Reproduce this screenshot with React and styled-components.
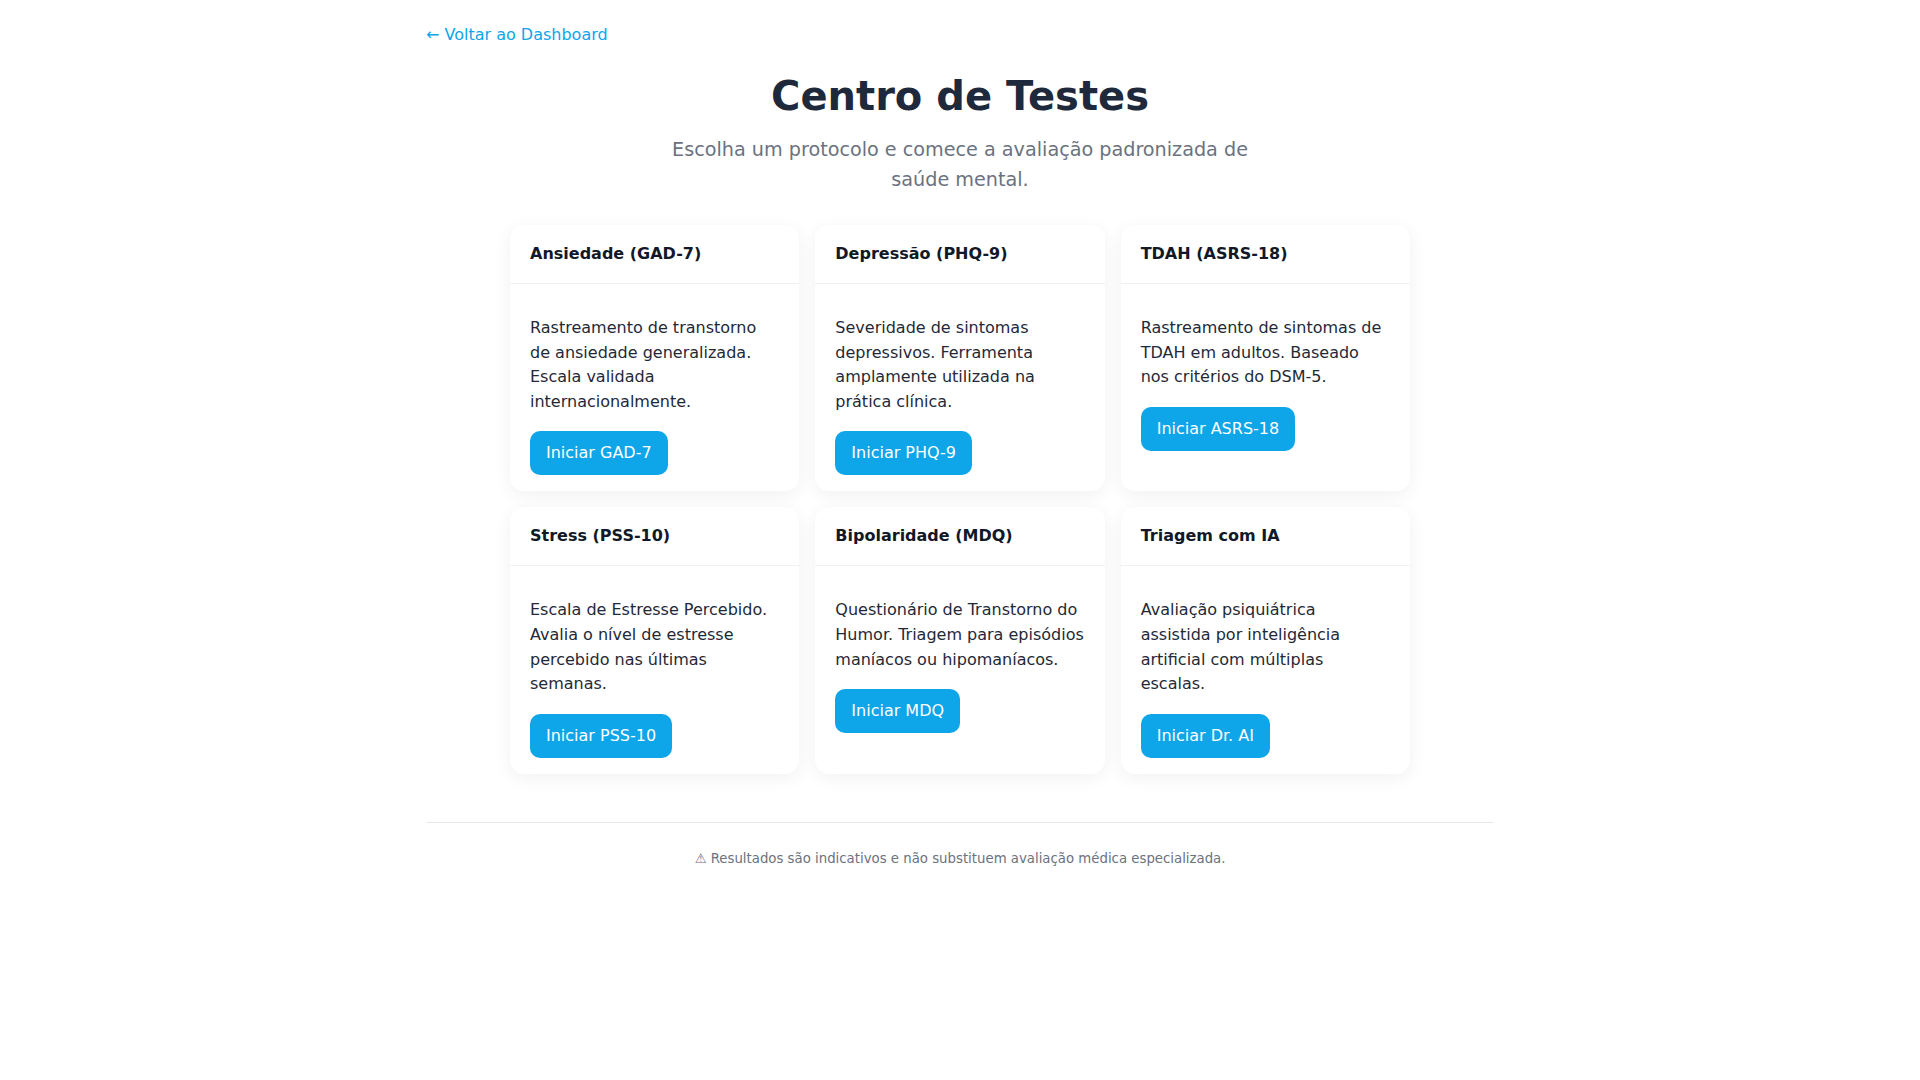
import styled, { createGlobalStyle } from "styled-components";

const GlobalStyle = createGlobalStyle`
	* {
		box-sizing: border-box;
	}
	body {
		margin: 0;
		background: #ffffff;
		font-family: "DejaVu Sans", "Noto Sans", sans-serif;
		color: #1f2937;
	}
`;

const tests = [
	{
		title: "Ansiedade (GAD-7)",
		text: "Rastreamento de transtorno de ansiedade generalizada. Escala validada internacionalmente.",
		action: "Iniciar GAD-7",
	},
	{
		title: "Depressão (PHQ-9)",
		text: "Severidade de sintomas depressivos. Ferramenta amplamente utilizada na prática clínica.",
		action: "Iniciar PHQ-9",
	},
	{
		title: "TDAH (ASRS-18)",
		text: "Rastreamento de sintomas de TDAH em adultos. Baseado nos critérios do DSM-5.",
		action: "Iniciar ASRS-18",
	},
	{
		title: "Stress (PSS-10)",
		text: "Escala de Estresse Percebido. Avalia o nível de estresse percebido nas últimas semanas.",
		action: "Iniciar PSS-10",
	},
	{
		title: "Bipolaridade (MDQ)",
		text: "Questionário de Transtorno do Humor. Triagem para episódios maníacos ou hipomaníacos.",
		action: "Iniciar MDQ",
	},
	{
		title: "Triagem com IA",
		text: "Avaliação psiquiátrica assistida por inteligência artificial com múltiplas escalas.",
		action: "Iniciar Dr. AI",
	},
];

function TestCard({ title, text, action }) {
	return (
		<Card>
			<CardHeader>
				<CardTitle>{title}</CardTitle>
			</CardHeader>
			<CardBody>
				<CardText>{text}</CardText>
				<StartButton type="button">{action}</StartButton>
			</CardBody>
		</Card>
	);
}

export default function App() {
	return (
		<>
			<GlobalStyle />
			<Page>
				<BackLink href="#">← Voltar ao Dashboard</BackLink>
				<Hero>
					<Title>Centro de Testes</Title>
					<Subtitle>
						Escolha um protocolo e comece a avaliação padronizada de
						saúde mental.
					</Subtitle>
				</Hero>
				<Grid>
					{tests.map((test) => (
						<TestCard key={test.title} {...test} />
					))}
				</Grid>
				<Footer>
					⚠ Resultados são indicativos e não substituem avaliação médica
					especializada.
				</Footer>
			</Page>
		</>
	);
}

const Page = styled.main`
	max-width: 1100px;
	margin: 0 auto;
	padding: 23px 16px 40px;
`;

const BackLink = styled.a`
	display: inline-block;
	font-size: 16px;
	line-height: 24px;
	color: #0ea5e9;
	text-decoration: none;
`;

const Hero = styled.header`
	display: flex;
	flex-direction: column;
	align-items: center;
	text-align: center;
	margin-top: 25px;
`;

const Title = styled.h1`
	margin: 0;
	font-size: 40px;
	line-height: 48px;
	font-weight: 700;
	color: #1e293b;
`;

const Subtitle = styled.p`
	margin: 15px 0 0;
	max-width: 600px;
	font-size: 19.2px;
	line-height: 30px;
	color: #6b7280;
`;

const Grid = styled.section`
	display: grid;
	grid-template-columns: repeat(3, 1fr);
	gap: 16px;
	max-width: 900px;
	margin: 30px auto 0;
`;

const Card = styled.article`
	display: flex;
	flex-direction: column;
	background: #ffffff;
	border-radius: 14px;
	box-shadow: 0 4px 18px rgba(15, 23, 42, 0.06);
	overflow: hidden;
`;

const CardHeader = styled.div`
	padding: 17px 20px;
	border-bottom: 1px solid #eef1f6;
`;

const CardTitle = styled.h3`
	margin: 0;
	font-size: 16px;
	line-height: 24px;
	font-weight: 700;
	color: #111827;
`;

const CardBody = styled.div`
	display: flex;
	flex-direction: column;
	align-items: flex-start;
	padding: 32px 20px 16px;
`;

const CardText = styled.p`
	margin: 0 0 17px;
	font-size: 16px;
	line-height: 24.6px;
	color: #1f2937;
`;

const StartButton = styled.button`
	border: none;
	border-radius: 10px;
	padding: 10px 16px;
	background: #0ea5e9;
	color: #ffffff;
	font-family: inherit;
	font-size: 16px;
	line-height: 24px;
	cursor: pointer;
`;

const Footer = styled.footer`
	margin-top: 48px;
	padding-top: 26px;
	border-top: 1px solid #e5e7eb;
	text-align: center;
	font-size: 13.3px;
	line-height: 20px;
	color: #6b7280;
`;
